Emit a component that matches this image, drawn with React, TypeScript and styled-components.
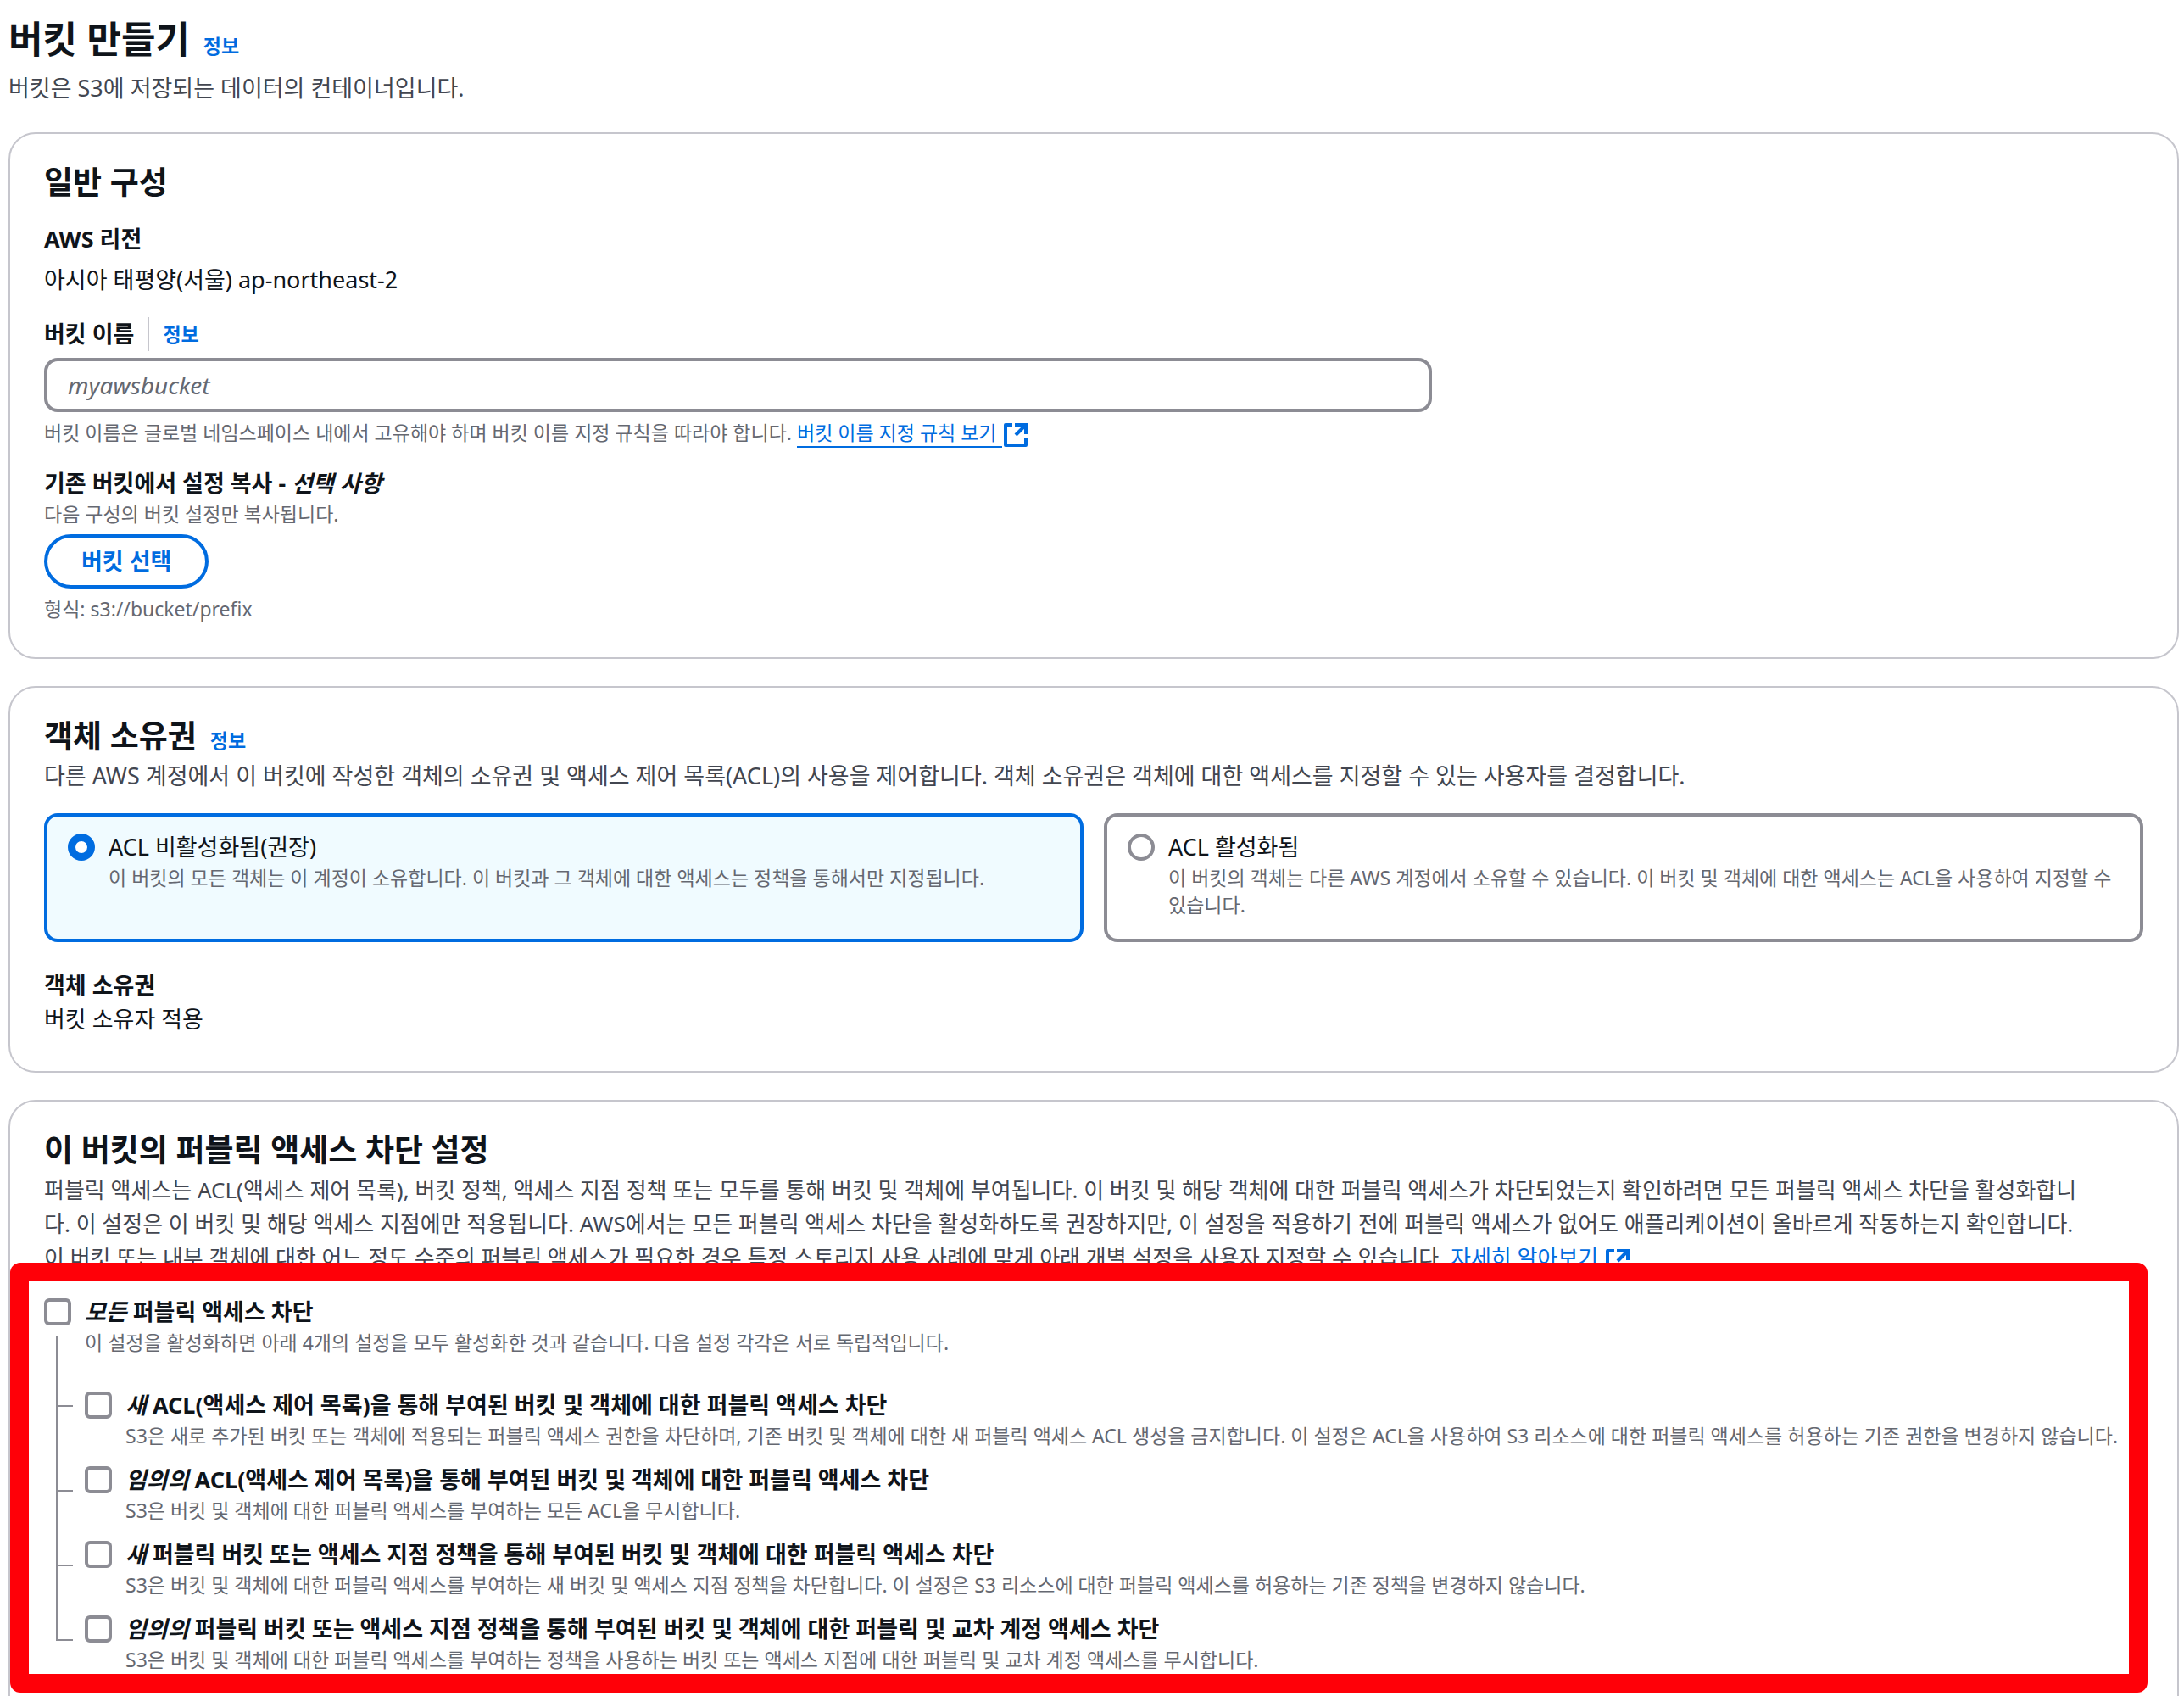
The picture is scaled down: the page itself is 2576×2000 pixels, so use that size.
import React from "react";
import styled, { createGlobalStyle, css } from "styled-components";

const color = {
  text: "#0f141a",
  secondary: "#424650",
  muted: "#656871",
  link: "#006ce0",
  divider: "#c6c6cd",
  control: "#8c8c94",
  selected: "#f0fbff",
  highlight: "#ff0008",
};

const GlobalStyle = createGlobalStyle`
  *, *::before, *::after { box-sizing: border-box; }
  body {
    margin: 0;
    background: #ffffff;
    color: ${color.text};
    font-family: "Noto Sans", "Noto Sans CJK KR", sans-serif;
    font-size: 27px;
    line-height: 40px;
  }
  h1, h2, h3, p, ul, dl, dd { margin: 0; padding: 0; }
  ul { list-style: none; }
  button, input { font: inherit; }
`;

const Page = styled.main`
  height: 100vh;
  overflow: hidden;
  padding: 18px 6px 0 10px;
  display: flex;
  flex-direction: column;
  gap: 32px;
`;

const PageHeader = styled.header`
  display: flex;
  flex-direction: column;
  gap: 10px;
`;

const TitleRow = styled.div`
  display: flex;
  align-items: baseline;
  gap: 16px;
`;

const PageTitle = styled.h1`
  font-size: 44px;
  line-height: 56px;
  font-weight: 700;
`;

const SectionTitle = styled.h2`
  font-size: 37px;
  line-height: 48px;
  font-weight: 700;
`;

const InfoLink = styled.a`
  color: ${color.link};
  font-size: 23px;
  line-height: 32px;
  font-weight: 700;
  text-decoration: none;
`;

const Description = styled.p`
  color: ${color.secondary};
`;

const LongDescription = styled(Description)`
  padding-right: 56px;
  font-size: 26px;
`;

const Card = styled.section`
  position: relative;
  flex-shrink: 0;
  border: 2px solid ${color.divider};
  border-radius: 32px;
  padding: 33px 40px 41px;
`;

const CardHeader = styled.div`
  display: flex;
  flex-direction: column;
  gap: 3px;
`;

const FieldLabel = styled.label`
  font-weight: 700;
`;

const GroupLabel = styled.h3`
  font-size: 27px;
  line-height: 40px;
  font-weight: 700;
`;

const Hint = styled.p`
  color: ${color.muted};
  font-size: 23px;
  line-height: 32px;
`;

const Region = styled.div`
  display: flex;
  flex-direction: column;
  gap: 8px;
  margin-top: 23px;
`;

const Field = styled.div`
  margin-top: 24px;
`;

const LabelRow = styled.div`
  display: flex;
  align-items: center;
`;

const LabelInfo = styled.span`
  display: flex;
  align-items: center;
  height: 40px;
  margin-left: 16px;
  padding-left: 16px;
  border-left: 2px solid ${color.divider};
`;

const FormGrid = styled.div`
  display: grid;
  grid-template-columns: repeat(12, 1fr);
  column-gap: 40px;
  margin: 8px 0;
`;

const TextInput = styled.input`
  grid-column: span 8;
  height: 64px;
  padding: 0 24px;
  border: 4px solid ${color.control};
  border-radius: 16px;
  background: #ffffff;
  color: ${color.text};
  font-size: 28px;
  &::placeholder {
    color: ${color.muted};
    font-style: italic;
    opacity: 1;
  }
`;

const ExternalLink = styled.a<{ $underlined?: boolean }>`
  color: ${color.link};
  text-decoration: none;
  ${(p) =>
    p.$underlined &&
    css`
      > span {
        border-bottom: 2px solid ${color.link};
      }
    `}
  svg {
    width: 32px;
    height: 32px;
    margin: -4px 0;
    vertical-align: -6px;
  }
`;

const PillButton = styled.button`
  display: block;
  height: 64px;
  margin: 8px 0;
  padding: 0 40px;
  border: 4px solid ${color.link};
  border-radius: 40px;
  background: #ffffff;
  color: ${color.link};
  font-weight: 700;
`;

const Tiles = styled.div`
  display: grid;
  grid-template-columns: 1fr 1fr;
  gap: 24px;
  margin-top: 24px;
`;

const Tile = styled.label<{ $selected?: boolean }>`
  display: flex;
  align-items: flex-start;
  gap: 16px;
  padding: 16px 24px 24px;
  border: 4px solid ${(p) => (p.$selected ? color.link : color.control)};
  border-radius: 16px;
  background: ${(p) => (p.$selected ? color.selected : "#ffffff")};
`;

const Radio = styled.input`
  appearance: none;
  flex: none;
  width: 32px;
  height: 32px;
  margin: 4px 0 0;
  border: 4px solid ${color.control};
  border-radius: 50%;
  background: #ffffff;
  &:checked {
    border: 9px solid ${color.link};
  }
`;

const Checkbox = styled.input`
  appearance: none;
  flex: none;
  width: 32px;
  height: 32px;
  margin: 4px 0 0;
  border: 4px solid ${color.control};
  border-radius: 6px;
  background: #ffffff;
  &:checked {
    border-color: ${color.link};
    background: ${color.link};
  }
`;

const OptionText = styled.span`
  display: flex;
  flex-direction: column;
  min-width: 0;
`;

const OptionHint = styled.span`
  color: ${color.muted};
  font-size: 23px;
  line-height: 32px;
  word-break: keep-all;
`;

const Summary = styled.dl`
  margin-top: 31px;
  dt { font-weight: 700; }
`;

const ParentOption = styled.div`
  display: flex;
  gap: 16px;
  margin-top: 24px;
`;

const ParentControl = styled.div`
  display: flex;
  flex-direction: column;
  gap: 12px;
`;

const Stem = styled.span`
  flex: 1;
  margin-left: 14px;
  border-left: 2px solid ${color.control};
`;

const CheckLabel = styled.label`
  display: flex;
  flex-direction: column;
`;

const ParentLabel = styled(CheckLabel)`
  padding-bottom: 38px;
`;

const CheckTitle = styled.span`
  font-weight: 700;
`;

const ChildOption = styled.li`
  display: flex;
`;

const Branch = styled.span`
  display: flex;
  flex-direction: column;
  width: 48px;
  padding: 0 14px;
`;

const Elbow = styled.span<{ $first?: boolean }>`
  height: ${(p) => (p.$first ? 22 : 34)}px;
  border: solid ${color.control};
  border-width: 0 0 2px 2px;
`;

const Tail = styled.span`
  flex: 1;
  border-left: 2px solid ${color.control};
`;

const ChildLabel = styled(CheckLabel)`
  padding: 0 0 16px 16px;
`;

const HighlightFrame = styled.div`
  position: absolute;
  top: 190px;
  left: 0;
  right: 35px;
  height: 507px;
  border: 22px solid ${color.highlight};
  border-radius: 12px;
  pointer-events: none;
`;

const ExternalIcon = () => (
  <svg viewBox="0 0 32 32" fill="none" stroke="currentColor" strokeWidth="4" aria-hidden="true">
    <path d="M12 4H4V28H28V20" strokeLinejoin="round" />
    <path d="M15 4H28V15" />
    <path d="M16 16L27 5" />
  </svg>
);

const childOptions = [
  {
    id: "new-acl",
    em: "새",
    title: "ACL(액세스 제어 목록)을 통해 부여된 버킷 및 객체에 대한 퍼블릭 액세스 차단",
    hint: "S3은 새로 추가된 버킷 또는 객체에 적용되는 퍼블릭 액세스 권한을 차단하며, 기존 버킷 및 객체에 대한 새 퍼블릭 액세스 ACL 생성을 금지합니다. 이 설정은 ACL을 사용하여 S3 리소스에 대한 퍼블릭 액세스를 허용하는 기존 권한을 변경하지 않습니다.",
  },
  {
    id: "any-acl",
    em: "임의의",
    title: "ACL(액세스 제어 목록)을 통해 부여된 버킷 및 객체에 대한 퍼블릭 액세스 차단",
    hint: "S3은 버킷 및 객체에 대한 퍼블릭 액세스를 부여하는 모든 ACL을 무시합니다.",
  },
  {
    id: "new-policy",
    em: "새",
    title: "퍼블릭 버킷 또는 액세스 지점 정책을 통해 부여된 버킷 및 객체에 대한 퍼블릭 액세스 차단",
    hint: "S3은 버킷 및 객체에 대한 퍼블릭 액세스를 부여하는 새 버킷 및 액세스 지점 정책을 차단합니다. 이 설정은 S3 리소스에 대한 퍼블릭 액세스를 허용하는 기존 정책을 변경하지 않습니다.",
  },
  {
    id: "any-policy",
    em: "임의의",
    title: "퍼블릭 버킷 또는 액세스 지점 정책을 통해 부여된 버킷 및 객체에 대한 퍼블릭 및 교차 계정 액세스 차단",
    hint: "S3은 버킷 및 객체에 대한 퍼블릭 액세스를 부여하는 정책을 사용하는 버킷 또는 액세스 지점에 대한 퍼블릭 및 교차 계정 액세스를 무시합니다.",
  },
];

export default function App() {
  return (
    <>
      <GlobalStyle />
      <Page lang="ko">
        <PageHeader>
          <TitleRow>
            <PageTitle>버킷 만들기</PageTitle>
            <InfoLink href="#info">정보</InfoLink>
          </TitleRow>
          <Description>버킷은 S3에 저장되는 데이터의 컨테이너입니다.</Description>
        </PageHeader>

        <Card>
          <CardHeader>
            <SectionTitle>일반 구성</SectionTitle>
          </CardHeader>
          <Region>
            <GroupLabel>AWS 리전</GroupLabel>
            <p>아시아 태평양(서울) ap-northeast-2</p>
          </Region>
          <Field>
            <LabelRow>
              <FieldLabel htmlFor="bucket-name">버킷 이름</FieldLabel>
              <LabelInfo>
                <InfoLink href="#name-info">정보</InfoLink>
              </LabelInfo>
            </LabelRow>
            <FormGrid>
              <TextInput id="bucket-name" type="text" placeholder="myawsbucket" />
            </FormGrid>
            <Hint>
              버킷 이름은 글로벌 네임스페이스 내에서 고유해야 하며 버킷 이름 지정 규칙을 따라야 합니다.{" "}
              <ExternalLink href="#rules" $underlined>
                <span>버킷 이름 지정 규칙 보기 </span>
                <ExternalIcon />
              </ExternalLink>
            </Hint>
          </Field>
          <Field>
            <GroupLabel>
              기존 버킷에서 설정 복사 - <em>선택 사항</em>
            </GroupLabel>
            <Hint>다음 구성의 버킷 설정만 복사됩니다.</Hint>
            <PillButton type="button">버킷 선택</PillButton>
            <Hint>형식: s3://bucket/prefix</Hint>
          </Field>
        </Card>

        <Card>
          <CardHeader>
            <TitleRow>
              <SectionTitle>객체 소유권</SectionTitle>
              <InfoLink href="#ownership-info">정보</InfoLink>
            </TitleRow>
            <Description>
              다른 AWS 계정에서 이 버킷에 작성한 객체의 소유권 및 액세스 제어 목록(ACL)의 사용을 제어합니다. 객체 소유권은 객체에 대한 액세스를 지정할 수 있는 사용자를 결정합니다.
            </Description>
          </CardHeader>
          <Tiles role="radiogroup" aria-label="객체 소유권">
            <Tile $selected>
              <Radio type="radio" name="ownership" defaultChecked />
              <OptionText>
                <span>ACL 비활성화됨(권장)</span>
                <OptionHint>이 버킷의 모든 객체는 이 계정이 소유합니다. 이 버킷과 그 객체에 대한 액세스는 정책을 통해서만 지정됩니다.</OptionHint>
              </OptionText>
            </Tile>
            <Tile>
              <Radio type="radio" name="ownership" />
              <OptionText>
                <span>ACL 활성화됨</span>
                <OptionHint>이 버킷의 객체는 다른 AWS 계정에서 소유할 수 있습니다. 이 버킷 및 객체에 대한 액세스는 ACL을 사용하여 지정할 수 있습니다.</OptionHint>
              </OptionText>
            </Tile>
          </Tiles>
          <Summary>
            <dt>객체 소유권</dt>
            <dd>버킷 소유자 적용</dd>
          </Summary>
        </Card>

        <Card>
          <CardHeader>
            <SectionTitle>이 버킷의 퍼블릭 액세스 차단 설정</SectionTitle>
            <LongDescription>
              퍼블릭 액세스는 ACL(액세스 제어 목록), 버킷 정책, 액세스 지점 정책 또는 모두를 통해 버킷 및 객체에 부여됩니다. 이 버킷 및 해당 객체에 대한 퍼블릭 액세스가 차단되었는지 확인하려면 모든 퍼블릭 액세스 차단을 활성화합니다. 이 설정은 이 버킷 및 해당 액세스 지점에만 적용됩니다. AWS에서는 모든 퍼블릭 액세스 차단을 활성화하도록 권장하지만, 이 설정을 적용하기 전에 퍼블릭 액세스가 없어도 애플리케이션이 올바르게 작동하는지 확인합니다. 이 버킷 또는 내부 객체에 대한 어느 정도 수준의 퍼블릭 액세스가 필요한 경우 특정 스토리지 사용 사례에 맞게 아래 개별 설정을 사용자 지정할 수 있습니다.{" "}
              <ExternalLink href="#learn-more">
                자세히 알아보기 <ExternalIcon />
              </ExternalLink>
            </LongDescription>
          </CardHeader>
          <ParentOption>
            <ParentControl>
              <Checkbox type="checkbox" id="block-all" />
              <Stem />
            </ParentControl>
            <ParentLabel htmlFor="block-all">
              <CheckTitle>
                <em>모든</em> 퍼블릭 액세스 차단
              </CheckTitle>
              <OptionHint>이 설정을 활성화하면 아래 4개의 설정을 모두 활성화한 것과 같습니다. 다음 설정 각각은 서로 독립적입니다.</OptionHint>
            </ParentLabel>
          </ParentOption>
          <ul>
            {childOptions.map((option, index) => (
              <ChildOption key={option.id}>
                <Branch>
                  <Elbow $first={index === 0} />
                  {index < childOptions.length - 1 && <Tail />}
                </Branch>
                <Checkbox type="checkbox" id={option.id} />
                <ChildLabel htmlFor={option.id}>
                  <CheckTitle>
                    <em>{option.em}</em> {option.title}
                  </CheckTitle>
                  <OptionHint>{option.hint}</OptionHint>
                </ChildLabel>
              </ChildOption>
            ))}
          </ul>
          <HighlightFrame aria-hidden="true" />
        </Card>
      </Page>
    </>
  );
}
